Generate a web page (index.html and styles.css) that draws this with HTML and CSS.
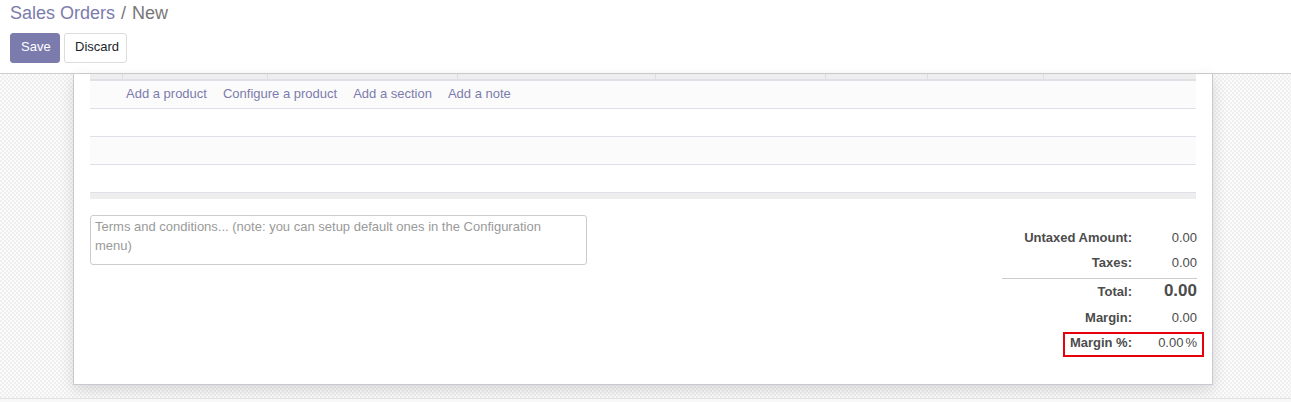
FILE: index.html
```html
<!DOCTYPE html>
<html>
<head>
<meta charset="utf-8">
<link rel="stylesheet" href="styles.css">
</head>
<body>
<div class="control-panel">
  <div class="breadcrumb"><span class="crumb-link">Sales Orders</span><span class="crumb-sep">/</span><span class="crumb-active">New</span></div>
  <div class="buttons">
    <button class="btn btn-primary">Save</button>
    <button class="btn btn-secondary">Discard</button>
  </div>
</div>
<div class="content">
  <div class="sheet">
    <div class="lines">
      <div class="thead">
        <span class="th w33"></span><span class="th w145"></span><span class="th w190"></span><span class="th w198"></span><span class="th w170"></span><span class="th w102"></span><span class="th w116"></span><span class="th grow"></span>
      </div>
      <div class="row odd add-row">
        <a class="add-link">Add a product</a>
        <a class="add-link">Configure a product</a>
        <a class="add-link">Add a section</a>
        <a class="add-link">Add a note</a>
      </div>
      <div class="row"></div>
      <div class="row odd"></div>
      <div class="row"></div>
      <div class="tfoot"></div>
    </div>
    <div class="bottom">
      <textarea class="note" placeholder="Terms and conditions... (note: you can setup default ones in the Configuration menu)"></textarea>
      <div class="totals">
        <div class="trow r1"><span class="tl">Untaxed Amount:</span><span class="tv">0.00</span></div>
        <div class="trow r2"><span class="tl">Taxes:</span><span class="tv">0.00</span></div>
        <div class="trow total"><span class="tl">Total:</span><span class="tv big">0.00</span></div>
        <div class="trow r4"><span class="tl">Margin:</span><span class="tv">0.00</span></div>
        <div class="trow r5"><span class="tl">Margin %:</span><span class="tv">0.00<span class="pct">%</span></span></div>
        <div class="highlight"></div>
      </div>
    </div>
  </div>
</div>
<div class="page-end"></div>
</body>
</html>
```
FILE: styles.css
```css
html, body {
  margin: 0;
  padding: 0;
  background: #fff;
  font-family: "Liberation Sans", Arial, sans-serif;
  font-size: 13px;
  color: #4c4c4c;
  overflow: hidden;
}

.control-panel {
  border-bottom: 1px solid #cfcfcf;
  padding: 0 10px;
  box-sizing: border-box;
  height: 74px;
}

.breadcrumb {
  font-size: 18px;
  line-height: 22px;
  padding-top: 2px;
  height: 31px;
  box-sizing: border-box;
}
.crumb-link { color: #7c7bad; }
.crumb-sep { color: #777; margin: 0 6px 0 6px; }
.crumb-active { color: #777; }

.buttons {
  display: flex;
  gap: 4px;
  padding-top: 2px;
}
.btn {
  font-family: "Liberation Sans", Arial, sans-serif;
  font-size: 13px;
  height: 30px;
  border-radius: 3px;
  padding: 0 10px 3px 10px;
  cursor: pointer;
  box-sizing: border-box;
}
.btn-primary {
  background: #7c7bad;
  border: 1px solid #7c7bad;
  color: #fff;
  width: 50px;
}
.btn-secondary {
  background: #fff;
  border: 1px solid #dcdcdc;
  color: #212529;
  width: 63px;
}

.content {
  height: 324px;
  background-color: #f9f9f9;
  background-image: repeating-conic-gradient(#efefef 0 25%, #fbfbfb 0 50%);
  background-size: 4px 4px;
}

.sheet {
  margin-left: 73px;
  width: 1140px;
  height: 311px;
  box-sizing: border-box;
  background: #fff;
  border: 1px solid #c9c8d3;
  border-top: none;
  padding: 0 15px 0 16px;
  box-shadow: 0 5px 14px rgba(0, 0, 0, 0.13);
}

.lines {
  width: 1106px;
}
.thead {
  display: flex;
  height: 5px;
  background: #eeeeee;
  border-bottom: 2px solid #e0e0e6;
}
.th {
  border-right: 1px solid #dddddd;
  box-sizing: border-box;
}
.w33 { width: 33px; }
.w145 { width: 145px; }
.w190 { width: 190px; }
.w198 { width: 198px; }
.w170 { width: 170px; }
.w102 { width: 102px; }
.w116 { width: 116px; }
.grow { flex: 1; border-right: none; }

.row {
  height: 27px;
  border-bottom: 1px solid #e1dfe8;
  background: #fff;
}
.row.odd { background: #fbfbfb; }
.add-row {
  display: flex;
  align-items: center;
  gap: 16px;
  padding-left: 36px;
  padding-bottom: 2px;
  box-sizing: border-box;
  height: 28px;
}
.add-link {
  color: #7c7bad;
  cursor: pointer;
}
.tfoot {
  height: 6px;
  background: #eeeeee;
}

.bottom {
  display: flex;
  justify-content: space-between;
  align-items: flex-start;
}
.note {
  margin-top: 16px;
  width: 497px;
  height: 50px;
  box-sizing: border-box;
  border: 1px solid #cccccc;
  border-radius: 3px;
  padding: 1px 24px 1px 4px;
  font-family: "Liberation Sans", Arial, sans-serif;
  font-size: 13px;
  line-height: 19px;
  resize: none;
  overflow: hidden;
  color: #4c4c4c;
  background: #fff;
}
.note::placeholder { color: #9a9a9a; }

.totals {
  position: relative;
  margin-top: 25px;
  width: 195px;
}
.trow {
  display: flex;
  align-items: center;
}
.tl {
  width: 130px;
  text-align: right;
  font-weight: bold;
  color: #4c4c4c;
}
.tv {
  flex: 1;
  text-align: right;
  color: #4c4c4c;
}
.r1 { height: 26px; }
.r2 { height: 24px; }
.total {
  margin-top: 4px;
  border-top: 1px solid #cccccc;
  height: 24px;
}
.big {
  font-size: 17px;
  font-weight: bold;
}
.r4 { height: 28px; }
.r5 { height: 23px; }
.pct { margin-left: 2px; }

.highlight {
  position: absolute;
  left: 61px;
  top: 108px;
  width: 141px;
  height: 25px;
  box-sizing: border-box;
  border: 2px solid #e8000b;
}

.page-end {
  height: 4px;
  border-top: 1px solid #e2e2e2;
  background: #f8f8f8;
}
```
